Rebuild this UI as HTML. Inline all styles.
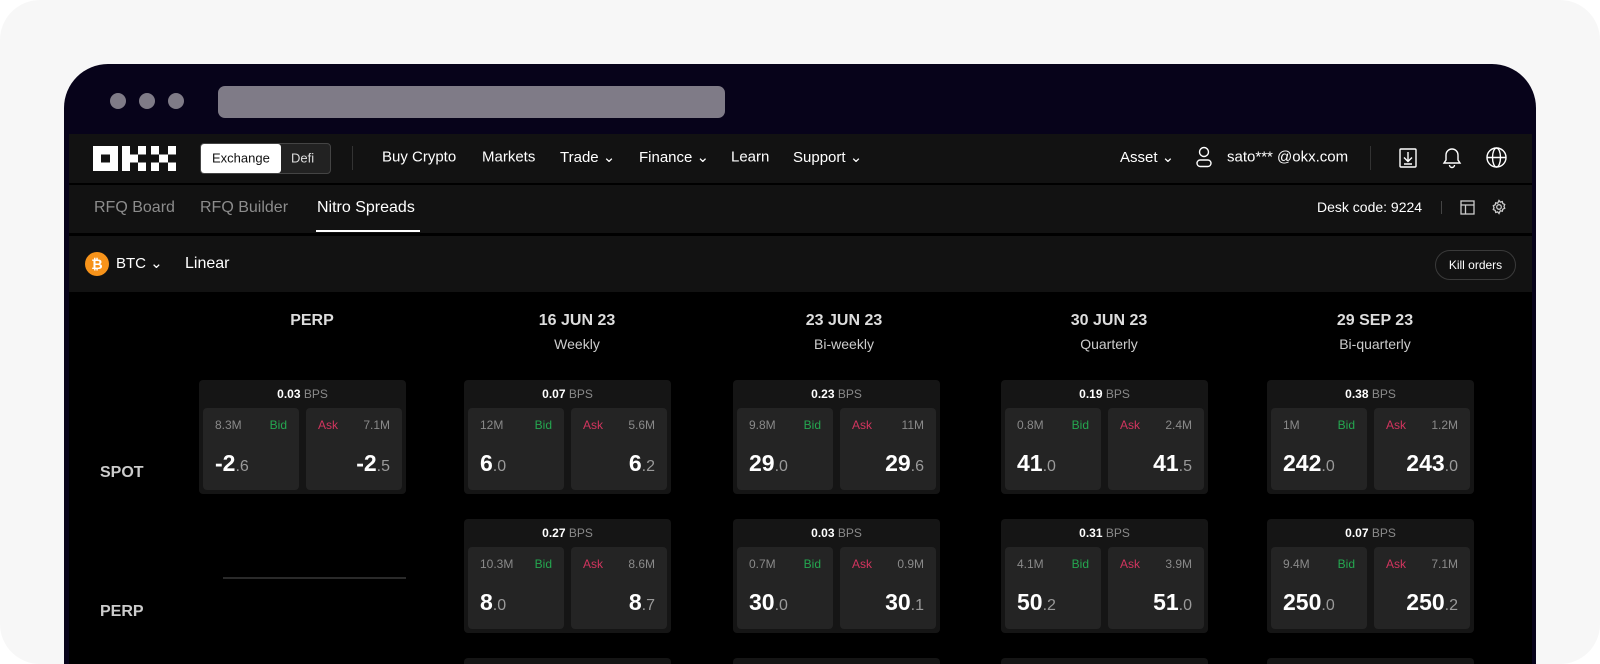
<!DOCTYPE html>
<html><head><meta charset="utf-8"><style>
*{margin:0;padding:0;box-sizing:border-box}
html,body{width:1600px;height:664px;background:#fff;overflow:hidden;font-family:"Liberation Sans",sans-serif}
.outer{position:absolute;left:0;top:0;width:1600px;height:664px;background:#f7f7f7;border-radius:40px}
.win{position:absolute;left:64px;top:64px;width:1472px;height:600px;background:#07031a;border-radius:44px 44px 0 0;overflow:hidden}
.dot{position:absolute;top:29px;width:16px;height:16px;border-radius:50%;background:#7f7b87}
.addr{position:absolute;left:154px;top:22px;width:507px;height:32px;border-radius:7px;background:#7f7b87}
.app{position:absolute;left:5px;top:70px;width:1463px;height:540px;background:#000;color:#fff}
.bar{position:absolute;left:0;width:100%;background:#121212}
.t{position:absolute;white-space:nowrap;transform:translateY(-50%)}
.card{position:absolute;width:207px;height:114px;background:#151515;border-radius:4px}
.bps{position:absolute;top:7px;width:100%;text-align:center;font-size:12px;color:#fff;font-weight:bold}
.bps span{color:#8a8a8a;font-weight:normal}
.cell{position:absolute;top:28px;width:96px;height:82px;background:#242424;border-radius:4px}
.cell .a{position:absolute;top:10px;font-size:12px;color:#8a8a8a}
.g{color:#25a750!important}.r{color:#d2355f!important}
.big{position:absolute;top:42px;font-size:23px;font-weight:bold;color:#fff}
.big span{font-size:16px;color:#9a9a9a;font-weight:normal}
.hd{position:absolute;text-align:center;transform:translateX(-50%);white-space:nowrap}
</style></head><body>
<div class="outer"></div>
<div class="win">
<div class="dot" style="left:46px"></div><div class="dot" style="left:75px"></div><div class="dot" style="left:104px"></div>
<div class="addr"></div>
<div class="app">
<div class="bar" style="top:0;height:49px"></div>
<div class="bar" style="top:51px;height:48px"></div>
<div class="bar" style="top:102px;height:56px"></div>
<svg style="position:absolute;left:24px;top:12px" width="83" height="25" viewBox="0 0 83 25"><path fill="#fff" d="M0 0h25v25H0zM29 0h8v25h-8zM37 8.5h8v8h-8zM45 0h8v8.5h-8zM45 16.5h8V25h-8zM58 0h8v8.5h-8zM75 0h8v8.5h-8zM66 8.5h9v8h-9zM58 16.5h8V25h-8zM75 16.5h8V25h-8z"/><path fill="#121212" d="M8 8.5h9v8H8z"/></svg>
<div style="position:absolute;left:131px;top:9px;width:131px;height:31px;border:1px solid #444;border-radius:4px;background:#222"></div>
<div style="position:absolute;left:132px;top:10px;width:80px;height:29px;border-radius:3px;background:#fff"></div>
<div class="t" style="left:143px;top:24px;font-size:13px;color:#111">Exchange</div>
<div class="t" style="left:222px;top:24px;font-size:13px;color:#ddd">Defi</div>
<div style="position:absolute;left:283px;top:12px;width:1px;height:24px;background:#333"></div>
<div class="t" style="left:313px;top:23px;font-size:15px">Buy Crypto</div>
<div class="t" style="left:413px;top:23px;font-size:15px">Markets</div>
<div class="t" style="left:491px;top:23px;font-size:15px">Trade ⌄</div>
<div class="t" style="left:570px;top:23px;font-size:15px">Finance ⌄</div>
<div class="t" style="left:662px;top:23px;font-size:15px">Learn</div>
<div class="t" style="left:724px;top:23px;font-size:15px">Support ⌄</div>
<div class="t" style="left:1051px;top:23px;font-size:15px">Asset ⌄</div>
<svg style="position:absolute;left:1126px;top:12px" width="18" height="22" viewBox="0 0 18 22" fill="none" stroke="#fff" stroke-width="1.4"><circle cx="9" cy="6" r="4.5"/><rect x="2" y="14" width="14" height="6.5" rx="3.2"/></svg>
<div class="t" style="left:1158px;top:23px;font-size:15px">sato*** @okx.com</div>
<div style="position:absolute;left:1301px;top:12px;width:1px;height:24px;background:#333"></div>
<svg style="position:absolute;left:1330px;top:14px" width="18" height="20" viewBox="0 0 18 20" fill="none" stroke="#fff" stroke-width="1.4"><rect x="1" y="1" width="16" height="18" rx="1"/><path d="M9 4v9M5 9.5l4 4 4-4M5 16h8"/></svg>
<svg style="position:absolute;left:1373px;top:13px" width="20" height="22" viewBox="0 0 20 22" fill="none" stroke="#fff" stroke-width="1.4"><path d="M10 2a6 6 0 0 0-6 6v5l-2 3h16l-2-3V8a6 6 0 0 0-6-6zM7.5 18a2.5 2.5 0 0 0 5 0"/></svg>
<svg style="position:absolute;left:1417px;top:13px" width="21" height="21" viewBox="0 0 21 21" fill="none" stroke="#fff" stroke-width="1.4"><circle cx="10.5" cy="10.5" r="9.5"/><ellipse cx="10.5" cy="10.5" rx="4" ry="9.5"/><path d="M1 10.5h19"/></svg>
<div class="t" style="left:25px;top:74px;font-size:16px;color:#8c8c8c">RFQ Board</div>
<div class="t" style="left:131px;top:74px;font-size:16px;color:#8c8c8c">RFQ Builder</div>
<div class="t" style="left:248px;top:74px;font-size:16px;color:#fff">Nitro Spreads</div>
<div style="position:absolute;left:247px;top:96px;width:104px;height:2px;background:#fff"></div>
<div class="t" style="left:1248px;top:73px;font-size:14px">Desk code: 9224</div>
<div style="position:absolute;left:1372px;top:67px;width:1px;height:13px;background:#444"></div>
<svg style="position:absolute;left:1391px;top:66px" width="15" height="15" viewBox="0 0 15 15" fill="none" stroke="#ccc" stroke-width="1.3"><rect x="1" y="1" width="13" height="13"/><path d="M1 5h13M5.5 5v9"/></svg>
<svg style="position:absolute;left:1422px;top:65px" width="16" height="16" viewBox="0 0 16 16" fill="none" stroke="#ccc" stroke-width="1.3"><path d="M8 1.5l1.3 1.6 2-.5.5 2 1.9.9-.7 1.9.7 1.9-1.9.9-.5 2-2-.5L8 14.5l-1.3-1.6-2 .5-.5-2-1.9-.9.7-1.9-.7-1.9 1.9-.9.5-2 2 .5z"/><circle cx="8" cy="8" r="2.3"/></svg>
<svg style="position:absolute;left:16px;top:118px" width="24" height="24" viewBox="0 0 24 24"><circle cx="12" cy="12" r="12" fill="#f7931a"/><text x="12" y="17" font-size="14" font-weight="bold" fill="#fff" text-anchor="middle" font-family="Liberation Sans">₿</text></svg>
<div class="t" style="left:47px;top:129px;font-size:15px">BTC ⌄</div>
<div class="t" style="left:116px;top:130px;font-size:16px">Linear</div>
<div style="position:absolute;left:1366px;top:116px;width:81px;height:30px;border:1px solid #3a3a3a;border-radius:15px;font-size:12px;line-height:28px;text-align:center">Kill orders</div>
<div class="hd" style="left:243px;top:178px;font-size:16px;font-weight:bold;color:#ddd">PERP</div>
<div class="hd" style="left:508px;top:178px;font-size:16px;font-weight:bold;color:#ddd">16 JUN 23</div><div class="hd" style="left:508px;top:202px;font-size:14px;color:#ccc">Weekly</div>
<div class="hd" style="left:775px;top:178px;font-size:16px;font-weight:bold;color:#ddd">23 JUN 23</div><div class="hd" style="left:775px;top:202px;font-size:14px;color:#ccc">Bi-weekly</div>
<div class="hd" style="left:1040px;top:178px;font-size:16px;font-weight:bold;color:#ddd">30 JUN 23</div><div class="hd" style="left:1040px;top:202px;font-size:14px;color:#ccc">Quarterly</div>
<div class="hd" style="left:1306px;top:178px;font-size:16px;font-weight:bold;color:#ddd">29 SEP 23</div><div class="hd" style="left:1306px;top:202px;font-size:14px;color:#ccc">Bi-quarterly</div>
<div class="t" style="left:31px;top:339px;font-size:16px;font-weight:bold;color:#ccc">SPOT</div>
<div class="t" style="left:31px;top:478px;font-size:16px;font-weight:bold;color:#ccc">PERP</div>
<div style="position:absolute;left:154px;top:443px;width:183px;height:2px;background:#2a2a2a"></div>
<div id="cards"></div>
</div></div>
<script>
var cols=[130,395,664,932,1198],rows=[246,385,524];
var d=[
[[0,"0.03","8.3M","7.1M","-2","6","-2","5"],[1,"0.07","12M","5.6M","6","0","6","2"],[2,"0.23","9.8M","11M","29","0","29","6"],[3,"0.19","0.8M","2.4M","41","0","41","5"],[4,"0.38","1M","1.2M","242","0","243","0"]],
[[1,"0.27","10.3M","8.6M","8","0","8","7"],[2,"0.03","0.7M","0.9M","30","0","30","1"],[3,"0.31","4.1M","3.9M","50","2","51","0"],[4,"0.07","9.4M","7.1M","250","0","250","2"]],
[[1,"","","","","","",""],[2,"","","","","","",""],[3,"","","","","","",""],[4,"","","","","","",""]]];
var h="";
d.forEach(function(r,ri){r.forEach(function(c){
h+='<div class="card" style="left:'+cols[c[0]]+'px;top:'+rows[ri]+'px">';
if(c[1]){h+='<div class="bps">'+c[1]+' <span>BPS</span></div>'+
'<div class="cell" style="left:4px"><div class="a" style="left:12px">'+c[2]+'</div><div class="a g" style="right:12px">Bid</div><div class="big" style="left:12px">'+c[4]+'<span>.'+c[5]+'</span></div></div>'+
'<div class="cell" style="left:107px"><div class="a r" style="left:12px">Ask</div><div class="a" style="right:12px">'+c[3]+'</div><div class="big" style="right:12px">'+c[6]+'<span>.'+c[7]+'</span></div></div>';}
h+='</div>';});});
document.getElementById("cards").outerHTML=h;
</script>
</body></html>
